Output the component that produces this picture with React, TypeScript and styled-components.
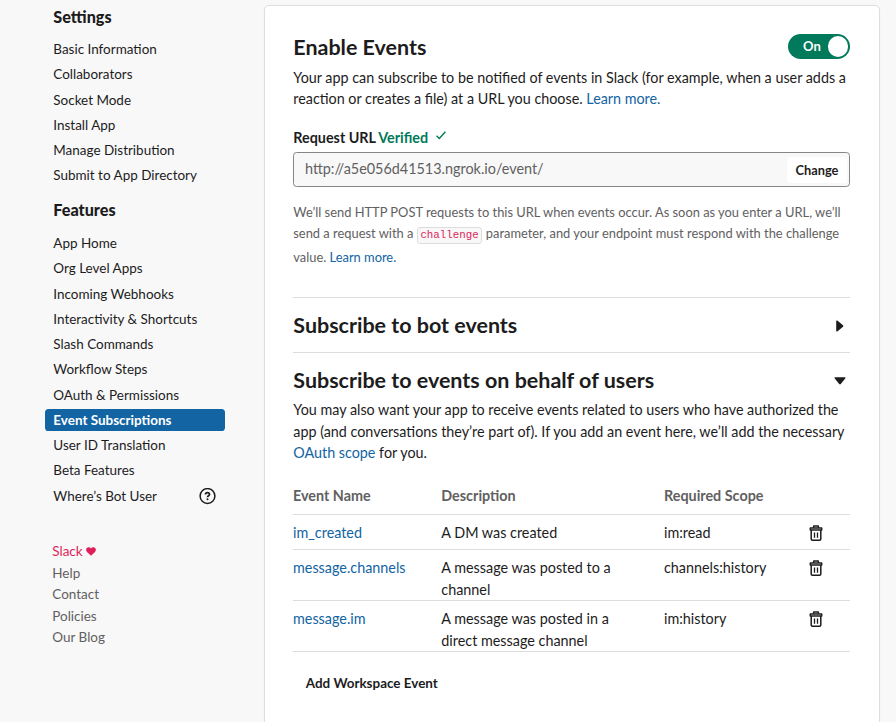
import React from "react";
import styled, { createGlobalStyle } from "styled-components";

const ink = "#1d1c1d";
const muted = "#616061";
const link = "#1264a3";
const rule = "#dddddd";

const GlobalStyle = createGlobalStyle`
  * { box-sizing: border-box; }
  body {
    margin: 0;
    background: #f8f8f8;
    color: ${ink};
    font-family: Lato, "Liberation Sans", sans-serif;
    font-size: 14.4px;
    line-height: 21.6px;
  }
  h2, h3, p, ul { margin: 0; padding: 0; }
`;

const Page = styled.div`
  display: flex;
  align-items: flex-start;
  width: 896px;
  height: 722px;
  overflow: hidden;
`;

const Sidebar = styled.nav`
  flex: none;
  width: 264px;
  padding: 6px 39px 0 45px;
`;

const SideHeading = styled.h3<{ $h: number }>`
  height: ${(p) => p.$h}px;
  padding-left: 8.3px;
  font-size: 16.2px;
  font-weight: 900;
  line-height: 21px;
`;

const SideList = styled.ul`
  list-style: none;
  margin-bottom: 12.08px;
`;

const SideItem = styled.li<{ $active?: boolean }>`
  display: flex;
  align-items: center;
  justify-content: space-between;
  height: 22.7px;
  margin-bottom: 2.58px;
  padding: 1.3px 9px 0 8.3px;
  border-radius: 3.6px;
  font-size: 13.48px;
  font-weight: ${(p) => (p.$active ? 700 : 400)};
  color: ${(p) => (p.$active ? "#fff" : ink)};
  background: ${(p) => (p.$active ? link : "transparent")};
`;

const SideFooter = styled.div`
  display: flex;
  flex-direction: column;
  padding: 21.94px 0 0 7.3px;
  font-size: 13.48px;
  color: ${muted};
`;

const FooterLink = styled.a<{ $brand?: boolean }>`
  display: flex;
  align-items: center;
  gap: 3px;
  height: 21.5px;
  color: ${(p) => (p.$brand ? "#e01e5a" : muted)};
`;

const Card = styled.main`
  flex: none;
  width: 616px;
  height: 760px;
  margin-top: 5px;
  padding: 27px 29px 0 28px;
  background: #fff;
  border: 1px solid ${rule};
  border-radius: 5px;
  box-shadow: 0 1px 2px rgba(0, 0, 0, 0.04);
`;

const TitleRow = styled.div`
  display: flex;
  justify-content: space-between;
  align-items: flex-start;
  height: 33.5px;
`;

const Title = styled.h2`
  padding-left: 0.3px;
  font-size: 21.47px;
  font-weight: 700;
  line-height: 28px;
`;

const Toggle = styled.div`
  display: flex;
  align-items: center;
  justify-content: space-between;
  width: 62px;
  height: 25px;
  margin-top: 1px;
  padding: 0 2px 0 15px;
  border-radius: 13px;
  background: #007a5a;
  color: #fff;
  font-size: 13px;
  font-weight: 700;
`;

const Knob = styled.span`
  width: 20.5px;
  height: 20.5px;
  border-radius: 50%;
  background: #fff;
`;

const Text = styled.p`
  padding-left: 0.3px;
  font-size: 14.34px;
  white-space: nowrap;
`;

const Link = styled.a`
  color: ${link};
`;

const FieldLabel = styled.div`
  display: flex;
  align-items: center;
  gap: 2.2px;
  height: 22px;
  margin-top: 17.3px;
  padding-left: 0.3px;
  font-size: 14.35px;
  font-weight: 700;
`;

const Verified = styled.span`
  display: flex;
  align-items: center;
  gap: 7.5px;
  color: #007a5a;
`;

const Field = styled.div`
  display: flex;
  align-items: center;
  justify-content: space-between;
  height: 35px;
  margin-top: 3.2px;
  padding: 0 2px 0 11px;
  border: 1px solid #868686;
  border-radius: 3.6px;
  background: #f8f8f8;
  color: ${muted};
`;

const FieldValue = styled.span`
  padding-bottom: 2px;
`;

const ChangeButton = styled.button`
  width: 60px;
  height: 26px;
  padding: 1px 0 0;
  border: 0;
  border-radius: 3.6px;
  background: #fff;
  color: ${ink};
  font: 700 12.8px Lato, sans-serif;
`;

const Hint = styled.p`
  height: 95px;
  margin-top: 15px;
  padding-left: 0.3px;
  font-size: 12.89px;
  color: ${muted};
  white-space: nowrap;
`;

const HintLine = styled.span<{ $h: number }>`
  display: flex;
  align-items: center;
  height: ${(p) => p.$h}px;
  white-space: pre;
`;

const Code = styled.code`
  height: 17px;
  margin: 3px 3.5px 0 3.4px;
  padding: 0 2.6px;
  border: 1px solid ${rule};
  border-radius: 3px;
  background: #f8f8f8;
  color: #e01e5a;
  font: 10.8px/14px "Liberation Mono", monospace;
`;

const Section = styled.section<{ $h: number; $top?: number }>`
  display: flex;
  align-items: center;
  justify-content: space-between;
  height: ${(p) => p.$h}px;
  padding: ${(p) => p.$top ?? 0}px 4px 0 0;
  border-top: 1px solid ${rule};
`;

const Caret = styled.svg`
  margin-top: 1px;
`;

const Table = styled.div`
  margin-top: 21px;
  font-size: 14.37px;
`;

const columns = "148.3px 222.7px 144px 1fr";

const HeadRow = styled.div`
  display: grid;
  grid-template-columns: ${columns};
  height: 30px;
  border-bottom: 1px solid ${rule};
  color: ${muted};
  font-weight: 700;
`;

const Row = styled.div<{ $h: number }>`
  display: grid;
  grid-template-columns: ${columns};
  height: ${(p) => p.$h}px;
  padding-top: 7px;
  border-bottom: 1px solid ${rule};
  white-space: pre;
`;

const IconCell = styled.span`
  padding: 3px 0 0 1px;
  line-height: 0;
`;

const AddButton = styled.button`
  width: 157px;
  height: 33px;
  margin-top: 15px;
  padding: 0 0 0 0.6px;
  border: 0;
  border-radius: 3.6px;
  background: #fff;
  color: ${ink};
  font: 700 13.45px Lato, sans-serif;
`;

const Trash = () => (
  <svg width="14" height="16" viewBox="0 0 14 16" fill="none" stroke={ink} strokeWidth="1.5">
    <path d="M4.300 2.800 4.900.9h4.200l.6 1.900" />
    <path d="M1.300 2.900h11.400v2.200H1.300zM2.200 5.200V14q0 1.200 1.200 1.200h7.200q1.200 0 1.200-1.200V5.200" strokeLinejoin="round" />
    <path d="M5.500 7.500v5.300M8.500 7.500v5.300" strokeWidth="1.300" />
  </svg>
);

const Help = () => (
  <svg width="17" height="17" viewBox="0 0 17 17" fill="none" stroke={ink}>
    <circle cx="8.5" cy="8" r="7.4" strokeWidth="1.5" />
    <path d="M6.5 6.600c0-1.200.9-1.900 2-1.900s2 .7 2 1.800c0 1.200-2 1.300-2 2.700" strokeWidth="1.700" />
    <circle cx="8.5" cy="11.200" r="1" fill={ink} stroke="none" />
  </svg>
);

const Heart = () => (
  <svg width="10" height="9" viewBox="0 0 10 9" fill="#e01e5a">
    <path d="M5 8.8 1 5C-.9 2.8.6.3 2.6.3 3.800.3 4.600.9 5 1.700 5.400.9 6.200.3 7.400.3 9.400.3 10.900 2.800 9 5z" />
  </svg>
);

const CheckIcon = styled.svg`
  margin-bottom: 5px;
`;

const Check = () => (
  <CheckIcon width="10" height="9" viewBox="0 0 10 9" fill="none" stroke="#007a5a" strokeWidth="1.4">
    <path d="M.6 4.800 3.300 7.500 9.400.8" />
  </CheckIcon>
);

const settings = [
  "Basic Information",
  "Collaborators",
  "Socket Mode",
  "Install App",
  "Manage Distribution",
  "Submit to App Directory",
];

const features = [
  "App Home",
  "Org Level Apps",
  "Incoming Webhooks",
  "Interactivity & Shortcuts",
  "Slash Commands",
  "Workflow Steps",
  "OAuth & Permissions",
  "Event Subscriptions",
  "User ID Translation",
  "Beta Features",
  "Where’s Bot User",
];

const events = [
  { name: "im_created", text: "A DM was created", scope: "im:read", h: 35 },
  { name: "message.channels", text: "A message was posted to a\nchannel", scope: "channels:history", h: 51 },
  { name: "message.im", text: "A message was posted in a\ndirect message channel", scope: "im:history", h: 51 },
];

export default function App() {
  return (
    <Page>
      <GlobalStyle />
      <Sidebar>
        <SideHeading $h={31.82}>Settings</SideHeading>
        <SideList>
          {settings.map((s) => (
            <SideItem key={s}>{s}</SideItem>
          ))}
        </SideList>
        <SideHeading $h={32.88}>Features</SideHeading>
        <SideList>
          {features.map((f) => (
            <SideItem key={f} $active={f === "Event Subscriptions"}>
              {f}
              {f.startsWith("Where") && <Help />}
            </SideItem>
          ))}
        </SideList>
        <SideFooter>
          <FooterLink $brand>
            Slack <Heart />
          </FooterLink>
          <FooterLink>Help</FooterLink>
          <FooterLink>Contact</FooterLink>
          <FooterLink>Policies</FooterLink>
          <FooterLink>Our Blog</FooterLink>
        </SideFooter>
      </Sidebar>
      <Card>
        <TitleRow>
          <Title>Enable Events</Title>
          <Toggle>
            On
            <Knob />
          </Toggle>
        </TitleRow>
        <Text>
          Your app can subscribe to be notified of events in Slack (for example, when a user adds a
          <br />
          reaction or creates a file) at a URL you choose. <Link>Learn more.</Link>
        </Text>
        <FieldLabel>
          Request URL
          <Verified>
            Verified <Check />
          </Verified>
        </FieldLabel>
        <Field>
          <FieldValue>http://a5e056d41513.ngrok.io/event/</FieldValue>
          <ChangeButton>Change</ChangeButton>
        </Field>
        <Hint>
          <HintLine $h={21}>We’ll send HTTP POST requests to this URL when events occur. As soon as you enter a URL, we’ll</HintLine>
          <HintLine $h={22}>
            send a request with a<Code>challenge</Code>parameter, and your endpoint must respond with the challenge
          </HintLine>
          <HintLine $h={25}>
            value. <Link>Learn more.</Link>
          </HintLine>
        </Hint>
        <Section $h={55}>
          <Title>Subscribe to bot events</Title>
          <Caret width="12" height="12" viewBox="0 0 12 12" fill={ink}>
            <path d="M2.200 1.200Q2.200 0 3.300.6L9 5.200q.8.800 0 1.600L3.300 11.400q-1.100.6-1.100-.6z" />
          </Caret>
        </Section>
        <Section $h={47} $top={8}>
          <Title>Subscribe to events on behalf of users</Title>
          <Caret width="12" height="12" viewBox="0 0 12 12" fill={ink}>
            <path d="M1.200 2.200Q0 2.200.6 3.300L5.200 9q.8.800 1.600 0L11.400 3.300q.6-1.100-.6-1.100z" />
          </Caret>
        </Section>
        <Text>
          You may also want your app to receive events related to users who have authorized the
          <br />
          app (and conversations they’re part of). If you add an event here, we’ll add the necessary
          <br />
          <Link>OAuth scope</Link> for you.
        </Text>
        <Table>
          <HeadRow>
            <span>Event Name</span>
            <span>Description</span>
            <span>Required Scope</span>
          </HeadRow>
          {events.map((e) => (
            <Row key={e.name} $h={e.h}>
              <Link>{e.name}</Link>
              <span>{e.text}</span>
              <span>{e.scope}</span>
              <IconCell>
                <Trash />
              </IconCell>
            </Row>
          ))}
        </Table>
        <AddButton>Add Workspace Event</AddButton>
      </Card>
    </Page>
  );
}
